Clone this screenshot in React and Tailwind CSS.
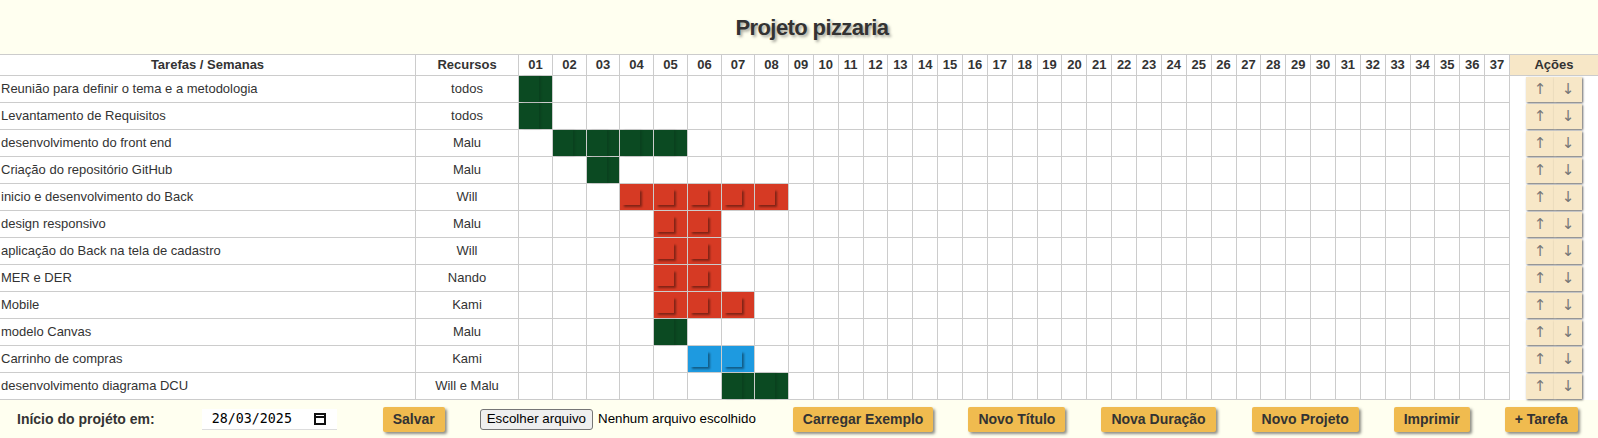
import React from 'react';

const weeks = Array.from({ length: 37 }, (_, i) => String(i + 1).padStart(2, '0'));

const tasks = [
  { name: 'Reunião para definir o tema e a metodologia', res: 'todos', color: 'green', from: 1, to: 1 },
  { name: 'Levantamento de Requisitos', res: 'todos', color: 'green', from: 1, to: 1 },
  { name: 'desenvolvimento do front end', res: 'Malu', color: 'green', from: 2, to: 5 },
  { name: 'Criação do repositório GitHub', res: 'Malu', color: 'green', from: 3, to: 3 },
  { name: 'inicio e desenvolvimento do Back', res: 'Will', color: 'red', from: 4, to: 8 },
  { name: 'design responsivo', res: 'Malu', color: 'red', from: 5, to: 6 },
  { name: 'aplicação do Back na tela de cadastro', res: 'Will', color: 'red', from: 5, to: 6 },
  { name: 'MER e DER', res: 'Nando', color: 'red', from: 5, to: 6 },
  { name: 'Mobile', res: 'Kami', color: 'red', from: 5, to: 7 },
  { name: 'modelo Canvas', res: 'Malu', color: 'green', from: 5, to: 5 },
  { name: 'Carrinho de compras', res: 'Kami', color: 'blue', from: 6, to: 7 },
  { name: 'desenvolvimento diagrama DCU', res: 'Will e Malu', color: 'green', from: 7, to: 8 },
];

const fills = {
  green: 'bg-[#0b4a22]',
  red: 'bg-[#d63a24]',
  blue: 'bg-[#1e9ae0]',
};

// the little raised block inside each filled week
const blocks = {
  green: 'shadow-[2px_0_2px_rgba(0,0,0,0.12)] h-full',
  red: 'shadow-[2px_2px_2px_rgba(0,0,0,0.4)] h-[16px]',
  blue: 'shadow-[2px_2px_2px_rgba(0,0,0,0.4)] h-[16px]',
};

const cell = 'border-r border-b border-[#cccccc]';
const arrowBtn = "w-[28px] h-[25px] bg-[#f7e7c7] text-[15px] leading-none text-[#777] font-['DejaVu_Sans',sans-serif] shadow-[1px_1px_2px_rgba(0,0,0,0.6)]";

function GoldButton({ children, className = '' }) {
  return (
    <button className={`h-[25px] px-[10px] bg-[#f0bb4f] text-[14px] font-bold text-[#333] rounded-[2px] shadow-[2px_2px_3px_rgba(0,0,0,0.45)] ${className}`}>
      {children}
    </button>
  );
}

export default function App() {
  return (
    <div className="min-h-screen bg-[#fffff0] font-['Liberation_Sans',Arial,sans-serif] text-[#333]">
      <h1 className="h-[54px] pl-[26px] flex items-center justify-center text-[22px] tracking-[-0.6px] font-bold [text-shadow:2px_2px_3px_rgba(0,0,0,0.35)]">
        Projeto pizzaria
      </h1>

      <div className="grid grid-cols-[416px_103px_34px_34px_33px_34px_34px_34px_33px_34px_repeat(29,minmax(0,1fr))_88px] bg-white text-[13px]">
        {/* header */}
        <div className={`${cell} border-t h-[22px] flex items-center justify-center font-bold`}>Tarefas / Semanas</div>
        <div className={`${cell} border-t flex items-center justify-center font-bold`}>Recursos</div>
        {weeks.map(w => (
          <div key={w} className={`${cell} border-t flex items-center justify-center font-bold`}>{w}</div>
        ))}
        <div className="border-t border-b border-[#cccccc] bg-[#f7e7c7] flex items-center justify-center font-bold">Ações</div>

        {/* rows */}
        {tasks.map((t, r) => (
          <React.Fragment key={r}>
            <div className={`${cell} h-[27px] flex items-center pl-[1px]`}>{t.name}</div>
            <div className={`${cell} flex items-center justify-center`}>{t.res}</div>
            {weeks.map((w, i) => {
              const on = i + 1 >= t.from && i + 1 <= t.to;
              return (
                <div key={w} className={`${cell} flex items-center ${on ? fills[t.color] : ''}`}>
                  {on && (
                    <div className={`ml-[2px] w-[18px] ${fills[t.color]} ${blocks[t.color]}`} />
                  )}
                </div>
              );
            })}
            <div className="flex items-center justify-center">
              <button className={arrowBtn}>↑</button>
              <button className={arrowBtn}>↓</button>
            </div>
          </React.Fragment>
        ))}
      </div>

      {/* footer */}
      <div className="h-[38px] flex items-center">
        <span className="ml-[17px] text-[14px] font-bold">Início do projéto em:</span>
        <div className="ml-[47px] w-[135px] h-[21px] bg-white border-b border-[#dddddd] flex items-center justify-between pl-[10px] pr-[11px]">
          <span className="font-['DejaVu_Sans_Mono',monospace] text-[13.33px] text-black">28/03/2025</span>
          <svg width="12" height="13" viewBox="0 0 12 13" fill="none" stroke="#111" strokeWidth="2">
            <rect x="1" y="2" width="10" height="10" />
            <line x1="1" y1="5" x2="11" y2="5" />
          </svg>
        </div>
        <GoldButton className="ml-[46px]">Salvar</GoldButton>
        <span className="ml-[35px] h-[21px] px-[6px] flex items-center bg-[#efefef] border border-[#767676] rounded-[3px] text-[13.33px] text-black">Escolher arquivo</span>
        <span className="ml-[5px] text-[13.33px] text-black">Nenhum arquivo escolhido</span>
        <GoldButton className="ml-[37px]">Carregar Exemplo</GoldButton>
        <GoldButton className="ml-[35px]">Novo Título</GoldButton>
        <GoldButton className="ml-[36px]">Nova Duração</GoldButton>
        <GoldButton className="ml-[36px]">Novo Projeto</GoldButton>
        <GoldButton className="ml-[35px]">Imprimir</GoldButton>
        <GoldButton className="ml-[35px]">+ Tarefa</GoldButton>
      </div>
    </div>
  );
}
